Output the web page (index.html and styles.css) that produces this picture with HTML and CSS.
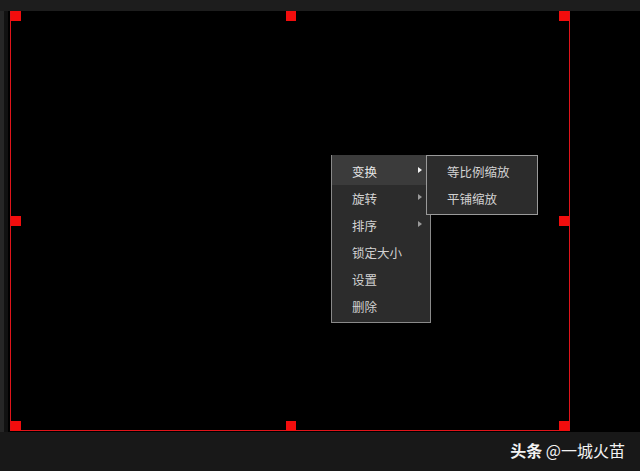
FILE: index.html
```html
<!DOCTYPE html>
<html lang="zh-CN">
<head>
<meta charset="utf-8">
<title>画布</title>
<link rel="stylesheet" href="styles.css">
</head>
<body>
<div class="app">
  <div class="topbar"></div>
  <div class="middle">
    <div class="strip"><div class="strip-light"></div><div class="strip-dark"></div></div>
    <div class="canvas">
      <div class="selection">
        <span class="handle h-tl"></span>
        <span class="handle h-tm"></span>
        <span class="handle h-tr"></span>
        <span class="handle h-ml"></span>
        <span class="handle h-mr"></span>
        <span class="handle h-bl"></span>
        <span class="handle h-bm"></span>
        <span class="handle h-br"></span>
      </div>
      <ul class="menu main-menu">
        <li class="item active">变换<span class="arrow white"></span></li>
        <li class="item">旋转<span class="arrow"></span></li>
        <li class="item">排序<span class="arrow"></span></li>
        <li class="item">锁定大小</li>
        <li class="item">设置</li>
        <li class="item">删除</li>
      </ul>
      <ul class="menu sub-menu">
        <li class="item">等比例缩放</li>
        <li class="item">平铺缩放</li>
      </ul>
    </div>
  </div>
  <div class="bottombar">
    <span class="watermark"><b>头条</b> @一城火苗</span>
  </div>
</div>
</body>
</html>
```
FILE: styles.css
```css
html, body {
  margin: 0;
  padding: 0;
  background: #1b1b1b;
}
.app {
  width: 640px;
  height: 471px;
  display: flex;
  flex-direction: column;
  font-family: "Noto Sans CJK SC", "Noto Sans", sans-serif;
}
.topbar {
  height: 11px;
  background: #1d1d1d;
  flex: none;
}
.middle {
  height: 421px;
  display: flex;
  flex: none;
}
.strip {
  width: 8px;
  display: flex;
  flex: none;
}
.strip-light {
  width: 4px;
  background: #262626;
}
.strip-dark {
  width: 4px;
  background: #111;
}
.canvas {
  flex: 1;
  background: #000;
  position: relative;
}
.selection {
  position: absolute;
  left: 2px;
  top: 0;
  width: 558px;
  height: 419px;
  border-left: 1px solid #e0141a;
  border-right: 1px solid #e0141a;
  border-bottom: 1px solid #e0141a;
}
.handle {
  position: absolute;
  width: 10px;
  height: 10px;
  background: #f20d0d;
}
.h-tl { left: 0; top: 0; }
.h-tm { left: 275px; top: 0; }
.h-tr { right: 0; top: 0; }
.h-ml { left: 0; top: 205px; }
.h-mr { right: 0; top: 205px; }
.h-bl { left: 0; bottom: -1px; }
.h-bm { left: 275px; bottom: -1px; }
.h-br { right: 0; bottom: -1px; }

.menu {
  position: absolute;
  margin: 0;
  padding: 0;
  list-style: none;
  background: #2c2c2c;
  border: 1px solid #8a8a8a;
  box-sizing: border-box;
}
.main-menu {
  left: 323px;
  top: 144px;
  width: 100px;
  height: 168px;
}
.sub-menu {
  left: 418px;
  top: 144px;
  width: 112px;
  height: 60px;
  border-color: #9a9a9a;
}
.item {
  height: 27px;
  line-height: 27px;
  padding-left: 20px;
  padding-right: 8px;
  font-size: 12.5px;
  color: #d2d2d2;
  display: flex;
  align-items: center;
  justify-content: space-between;
}
.item:first-child {
  height: 30px;
  padding-top: 3px;
  box-sizing: border-box;
  margin-top: -1px;
}
.item.active {
  background: #3b3b3b;
  color: #e6e6e6;
}
.arrow {
  width: 0;
  height: 0;
  border-top: 3.5px solid transparent;
  border-bottom: 3.5px solid transparent;
  border-left: 4px solid #9a9a9a;
  margin-top: -3px;
}
.arrow.white {
  border-left-color: #f4f4f4;
}
.bottombar {
  flex: 1;
  background: #181818;
  display: flex;
  align-items: center;
  justify-content: flex-end;
  padding-right: 15px;
  padding-bottom: 3px;
}
.watermark {
  color: #f2f2f2;
  font-size: 16px;
  line-height: 20px;
  font-family: "Noto Sans CJK SC", "Noto Sans", sans-serif;
}
.watermark b {
  font-weight: 700;
}
```
